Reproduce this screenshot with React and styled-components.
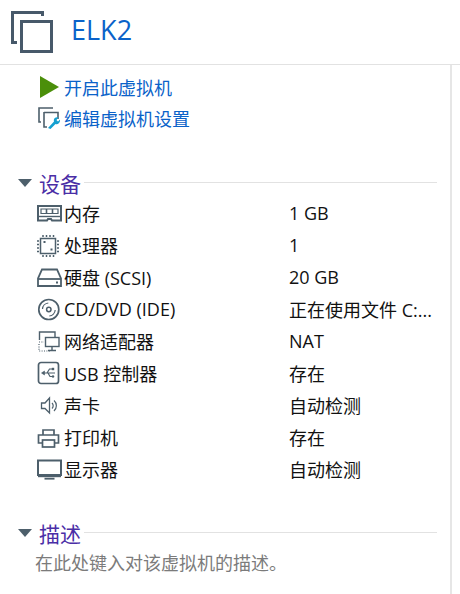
import React from 'react';
import styled, { createGlobalStyle } from 'styled-components';

const GlobalStyle = createGlobalStyle`
  html, body {
    margin: 0;
    padding: 0;
    background: #fff;
  }
  body {
    font-family: 'Open Sans', 'Noto Sans CJK SC', sans-serif;
  }
`;

const iconGrey = '#4d5f6b';

const Header = styled.header`
  height: 65px;
  box-sizing: border-box;
  border-bottom: 1px solid #e2e2e2;
  display: flex;
  align-items: center;
  padding-left: 11px;
  gap: 18px;
`;

const Title = styled.h1`
  margin: 0;
  padding-bottom: 6px;
  font: 400 27px 'Open Sans', 'Noto Sans CJK SC', sans-serif;
  color: #0a62c9;
`;

const Panel = styled.div`
  width: 452px;
  height: 529px;
  box-sizing: border-box;
  border-right: 2px solid #e6e6e6;
  overflow: hidden;
`;

const Actions = styled.div`
  display: flex;
  flex-direction: column;
  padding: 6px 0 0 38px;
`;

const Action = styled.a`
  height: 31px;
  display: flex;
  align-items: center;
  gap: 4px;
  font-size: 18px;
  color: #0a62c9;
`;

const ActionIcon = styled.span`
  width: 22px;
  height: 22px;
  display: flex;
  justify-content: flex-end;
`;

const Section = styled.section`
  margin-top: ${p => p.$top}px;
`;

const SectionHead = styled.div`
  height: 26px;
  display: flex;
  align-items: center;
  padding: 0 13px 0 18px;
`;

const Caret = styled.span`
  width: 0;
  height: 0;
  border-left: 7.5px solid transparent;
  border-right: 7.5px solid transparent;
  border-top: 8px solid ${iconGrey};
  margin-right: 7px;
`;

const SectionTitle = styled.span`
  font-size: 21px;
  color: #4a2ea6;
`;

const Rule = styled.span`
  flex: 1;
  height: 1px;
  background: #e2e2e2;
  margin: 0 0 2px 3px;
`;

const Rows = styled.div`
  display: flex;
  flex-direction: column;
  padding: 1px 0 0 37px;
`;

const Row = styled.div`
  height: 32px;
  display: grid;
  grid-template-columns: 27px 226px 1fr;
  align-items: center;
  font-size: 18px;
  color: #111;
  white-space: nowrap;
`;

const RowValue = styled.span`
  margin-left: -1px;
`;

const RowIcon = styled.svg`
  width: 25px;
  height: 25px;
  color: ${iconGrey};
`;

const Description = styled.p`
  margin: 3px 0 0 35px;
  font-size: 18px;
  color: #7b7b7b;
`;

const VmIcon = () => (
  <svg width="42" height="42" viewBox="0 0 42 42" fill="none" stroke="#47596a" strokeWidth="3">
    <path d="M31.5 5 V1.5 H1.5 V31.5 H6" />
    <rect x="10.5" y="10.5" width="30" height="30" />
  </svg>
);

const PlayIcon = () => (
  <svg width="20" height="22" viewBox="0 0 20 22">
    <path d="M0 0 L19 11 L0 22 Z" fill="#4b8f0a" />
  </svg>
);

const EditIcon = () => (
  <svg width="22" height="22" viewBox="0 0 22 22" fill="none">
    <path d="M15 1 H1 V15 H3" stroke="#4d5f6b" strokeWidth="1.6" />
    <path d="M6 5.5 H20 V12 M6 5 V20 H9" stroke="#4d5f6b" strokeWidth="1.6" />
    <path d="M10 21 L16 14.5 C15 11.5 18 9.5 20.5 10.5 L18.5 13 L20 14.5 L22 12.5 C22.5 15.5 20 18 17.5 17 L12.5 22 Z" fill="#14a0d0" />
  </svg>
);

const MemoryIcon = () => (
  <RowIcon viewBox="0 0 25 25" fill="none" stroke="currentColor">
    <path d="M1 5 H24 V19.5 H15 L14 18 H11 L10 19.5 H1 Z" strokeWidth="2" />
    <path d="M4 8 H21 V12.5 H4 Z" strokeWidth="1.2" />
    <path d="M9.5 8 V12.5 M15.5 8 V12.5" strokeWidth="1.6" />
    <path d="M2 15.5 H23" strokeWidth="1.4" />
  </RowIcon>
);

const CpuIcon = () => (
  <RowIcon viewBox="0 0 25 25" fill="none" stroke="currentColor">
    <rect x="3.5" y="5.5" width="15" height="15" strokeWidth="1.5" />
    <path d="M6 2 V4 M9.5 2 V4 M13 2 V4 M16.5 2 V4 M6 22 V24 M9.5 22 V24 M13 22 V24 M16.5 22 V24 M0 8 H2 M0 11.5 H2 M0 15 H2 M0 18.5 H2 M20 8 H22 M20 11.5 H22 M20 15 H22 M20 18.5 H22" strokeWidth="1.5" />
    <path d="M6.5 9 H8.5 M13.5 16.5 H15.5" strokeWidth="2" />
  </RowIcon>
);

const DiskIcon = () => (
  <RowIcon viewBox="0 0 25 25" fill="none" stroke="currentColor">
    <path d="M5 4.5 H20 L24 13.5 V21 H1 V13.5 Z" strokeWidth="1.8" />
    <path d="M1 14 H24" strokeWidth="1.8" />
    <path d="M19 17.5 H21" strokeWidth="2" />
  </RowIcon>
);

const CdIcon = () => (
  <RowIcon viewBox="0 0 25 25" fill="none" stroke="currentColor">
    <circle cx="11.8" cy="12.5" r="10" strokeWidth="1.7" />
    <circle cx="11.8" cy="12.5" r="2.2" strokeWidth="1.5" />
    <path d="M5.5 12 A6.5 6.5 0 0 1 11.3 6 M18.2 13 A6.5 6.5 0 0 1 12.3 19" strokeWidth="1.2" />
  </RowIcon>
);

const NetworkIcon = () => (
  <RowIcon viewBox="0 0 25 25" fill="none" stroke="currentColor">
    <path d="M2.5 11 V3 H18 V8" strokeWidth="1.4" />
    <rect x="8.5" y="8.5" width="13.5" height="9" strokeWidth="1.4" />
    <path d="M15 17.5 V21 M11 21.5 H19" strokeWidth="1.4" />
    <path d="M2 13 H7 M2 15 V22 H13" strokeWidth="1.2" strokeDasharray="1 1.4" />
  </RowIcon>
);

const UsbIcon = () => (
  <RowIcon viewBox="0 0 25 25" fill="none" stroke="currentColor">
    <rect x="1.5" y="1.5" width="20" height="21" rx="2.5" strokeWidth="1.7" />
    <path d="M5.5 12 H18 M10 12 L12.5 8 H15 M11 12 L13 15.5 H15" strokeWidth="1.2" />
    <path d="M4.5 12 L7.5 10 V14 Z" fill="currentColor" strokeWidth="0.6" />
    <rect x="15" y="7" width="2" height="2" fill="currentColor" strokeWidth="0.4" />
    <circle cx="16" cy="15.5" r="1.1" fill="currentColor" strokeWidth="0.4" />
  </RowIcon>
);

const SoundIcon = () => (
  <RowIcon viewBox="0 0 25 25" fill="none" stroke="currentColor">
    <path d="M4.5 10 H8 L12.5 5 V20 L8 15.5 H4.5 Z" strokeWidth="1.3" />
    <path d="M15 10 A3.8 3.8 0 0 1 15 15.5 M17 7.5 A7 7 0 0 1 17 18" strokeWidth="1.2" />
  </RowIcon>
);

const PrinterIcon = () => (
  <RowIcon viewBox="0 0 25 25" fill="none" stroke="currentColor">
    <path d="M6 10 V5 H17 V10" strokeWidth="1.7" />
    <path d="M5.5 18 H1.5 V10 H21.5 V18 H17.5" strokeWidth="1.7" />
    <rect x="5.5" y="15" width="12" height="7" strokeWidth="1.7" />
  </RowIcon>
);

const DisplayIcon = () => (
  <RowIcon viewBox="0 0 25 25" fill="none" stroke="currentColor">
    <rect x="1" y="3.5" width="23" height="14.5" strokeWidth="2" />
    <path d="M1 19.5 H24" strokeWidth="1.4" />
    <path d="M7.5 21.7 H17.5" strokeWidth="1.8" />
  </RowIcon>
);

const devices = [
  { name: '内存', value: '1 GB', Icon: MemoryIcon },
  { name: '处理器', value: '1', Icon: CpuIcon },
  { name: '硬盘 (SCSI)', value: '20 GB', Icon: DiskIcon },
  { name: 'CD/DVD (IDE)', value: '正在使用文件 C:...', Icon: CdIcon },
  { name: '网络适配器', value: 'NAT', Icon: NetworkIcon },
  { name: 'USB 控制器', value: '存在', Icon: UsbIcon },
  { name: '声卡', value: '自动检测', Icon: SoundIcon },
  { name: '打印机', value: '存在', Icon: PrinterIcon },
  { name: '显示器', value: '自动检测', Icon: DisplayIcon },
];

const App = () => (
  <>
    <GlobalStyle />
    <Header>
      <VmIcon />
      <Title>ELK2</Title>
    </Header>
    <Panel>
      <Actions>
        <Action><ActionIcon><PlayIcon /></ActionIcon>开启此虚拟机</Action>
        <Action><ActionIcon><EditIcon /></ActionIcon>编辑虚拟机设置</Action>
      </Actions>
      <Section $top={37}>
        <SectionHead>
          <Caret />
          <SectionTitle>设备</SectionTitle>
          <Rule />
        </SectionHead>
        <Rows>
          {devices.map(({ name, value, Icon }) => (
            <Row key={name}>
              <Icon />
              <span>{name}</span>
              <RowValue>{value}</RowValue>
            </Row>
          ))}
        </Rows>
      </Section>
      <Section $top={35}>
        <SectionHead>
          <Caret />
          <SectionTitle>描述</SectionTitle>
          <Rule />
        </SectionHead>
        <Description>在此处键入对该虚拟机的描述。</Description>
      </Section>
    </Panel>
  </>
);

export default App;
